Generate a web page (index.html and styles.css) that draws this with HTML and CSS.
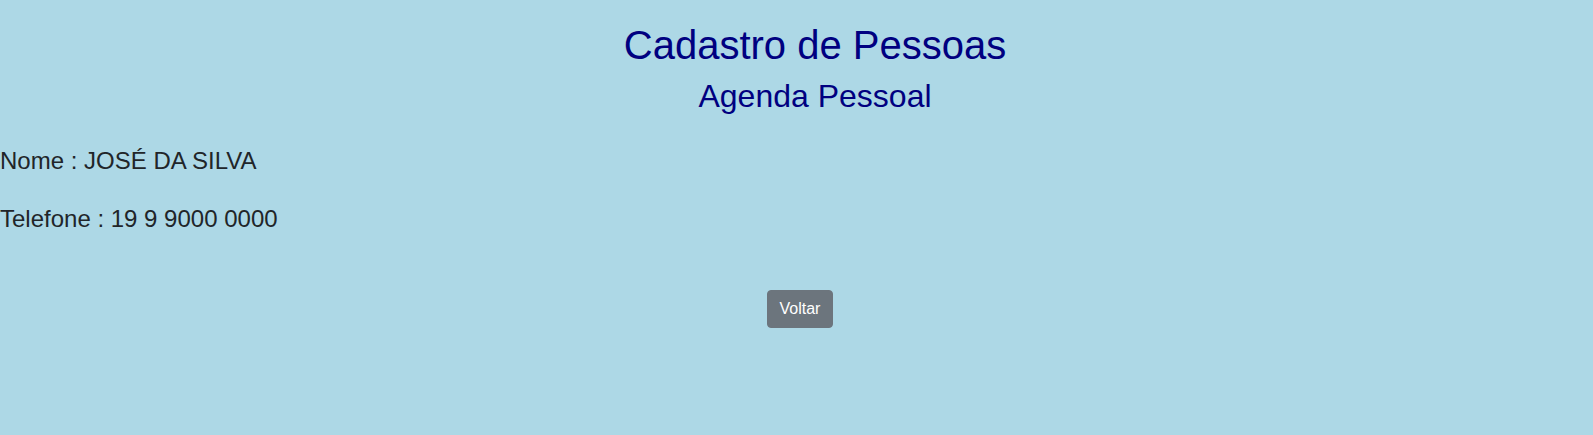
FILE: index.html
```html
<!DOCTYPE html>
<html lang="pt-BR">
<head>
<meta charset="utf-8">
<title>Cadastro de Pessoas</title>
<link rel="stylesheet" href="styles.css">
</head>
<body>
<header class="page-header">
  <h1 class="title">Cadastro de Pessoas</h1>
  <h2 class="subtitle">Agenda Pessoal</h2>
</header>
<main class="details">
  <p class="field">Nome : JOSÉ DA SILVA</p>
  <p class="field">Telefone : 19 9 9000 0000</p>
</main>
<div class="actions">
  <button class="btn btn-secondary" type="button">Voltar</button>
</div>
</body>
</html>
```

FILE: styles.css
```css
* { box-sizing: border-box; }

html, body {
  margin: 0;
  padding: 0;
}

body {
  background: #add8e6;
  font-family: "Liberation Sans", Arial, sans-serif;
  color: #212529;
  height: 435px;
}

.page-header {
  text-align: center;
  padding-left: 37px;
  padding-top: 21px;
  color: #000080;
}

.title {
  margin: 0 0 8px;
  font-size: 40px;
  font-weight: 400;
  line-height: 1.2;
}

.subtitle {
  margin: 0;
  font-size: 32px;
  font-weight: 400;
  line-height: 1.2;
}

.details {
  display: flex;
  flex-direction: column;
  gap: 22px;
  margin-top: 28px;
}

.field {
  margin: 0;
  font-size: 24px;
  line-height: 36px;
}

.actions {
  display: flex;
  justify-content: center;
  padding-left: 7px;
  margin-top: 53px;
}

.btn {
  font-family: "Liberation Sans", Arial, sans-serif;
  font-size: 16px;
  line-height: 24px;
  padding: 6px 12px;
  border: 1px solid transparent;
  border-radius: 4px;
  cursor: pointer;
}

.btn-secondary {
  background: #6c757d;
  border-color: #6c757d;
  color: #fff;
}
```
